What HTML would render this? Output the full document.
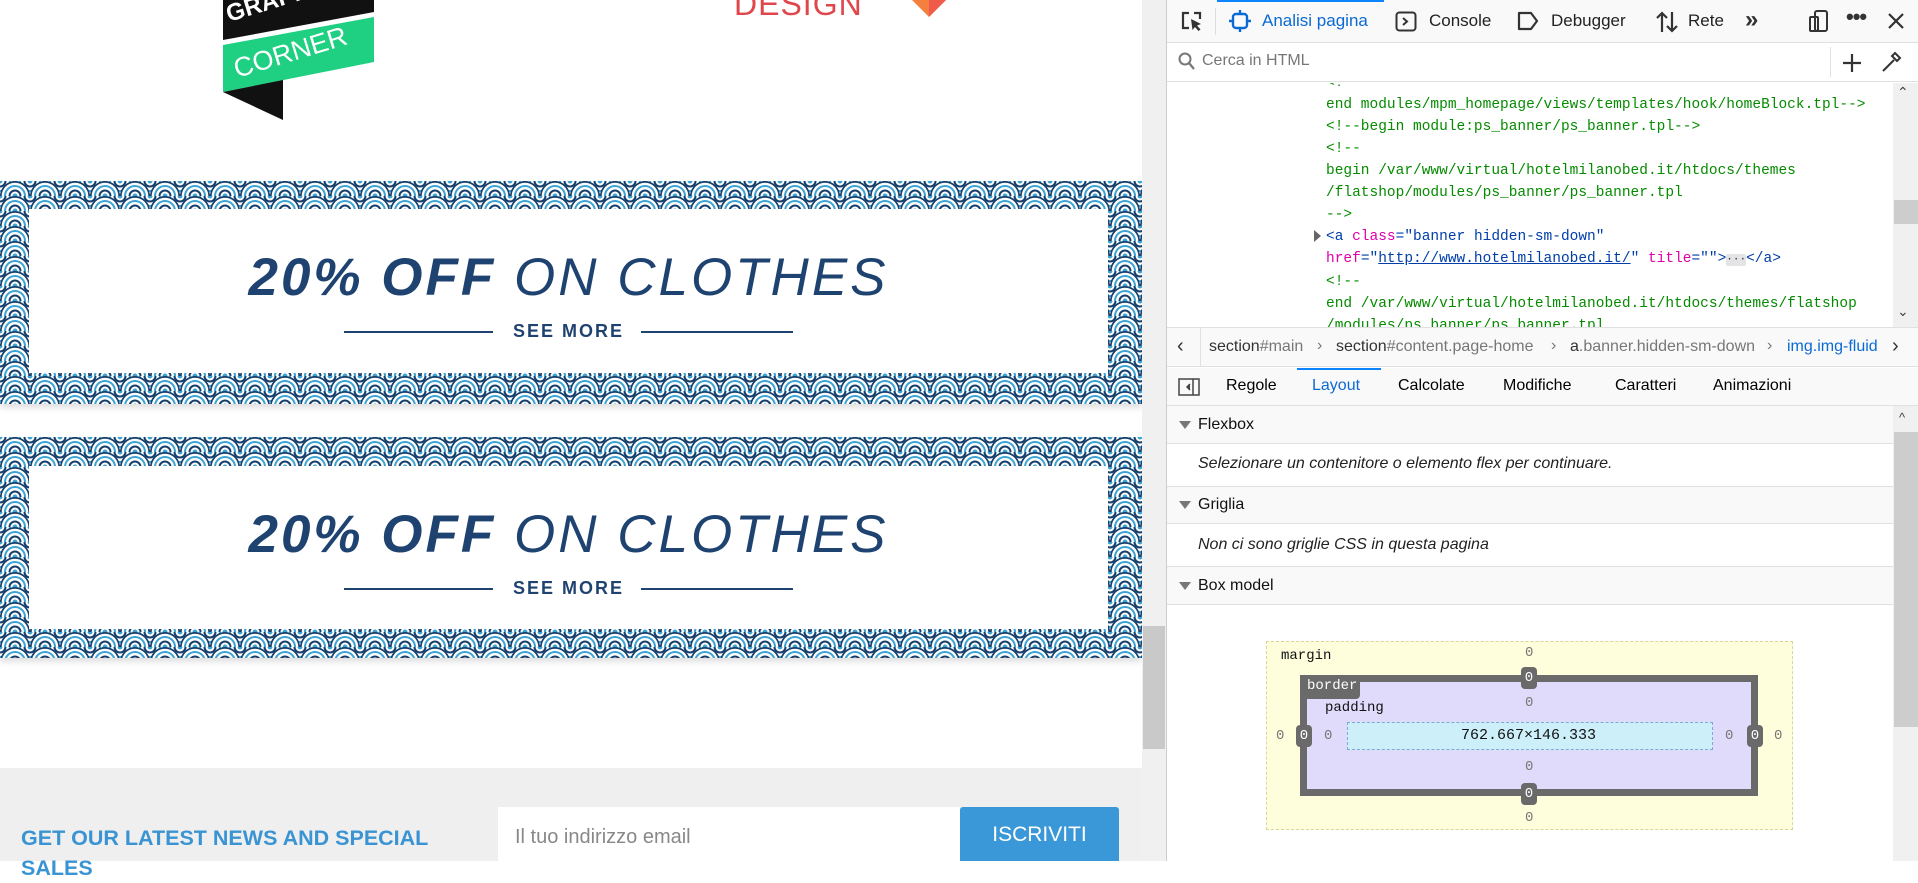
<!DOCTYPE html>
<html><head><meta charset="utf-8">
<style>
*{margin:0;padding:0;box-sizing:border-box}
body{width:1918px;height:861px;overflow:hidden;background:#fff;font-family:"Liberation Sans",sans-serif;position:relative}
.abs{position:absolute}
.banner{position:absolute;left:0;width:1142px;box-shadow:0 4px 6px rgba(0,0,0,.12)}
.inner{position:absolute;left:29px;right:34px;background:#fff;text-align:center;color:#1f4370}
.big{position:absolute;left:0;right:0;font-size:53px;font-style:italic;letter-spacing:3px;white-space:nowrap}
.big b{font-weight:bold}
.see{position:absolute;left:0;right:0;font-size:18px;font-weight:bold;letter-spacing:2px}
.ln{position:absolute;height:2px;background:#1f4370}
.dt{position:absolute;font-size:17px;color:#222;top:11px}
.code{position:absolute;left:1326px;font-family:"Liberation Mono",monospace;font-size:14.5px;color:#058b00;white-space:pre;line-height:22px}
.sec{position:absolute;left:1167px;width:726px;background:#f9f9fa;border-bottom:1px solid #e0e0e2;font-size:16px;color:#111}
.sec .tri{position:absolute;left:12px;top:50%;margin-top:-4px;border-left:6px solid transparent;border-right:6px solid transparent;border-top:8px solid #777}
.sec span{position:absolute;left:31px;top:50%;transform:translateY(-50%)}
.it{position:absolute;left:1198px;font-style:italic;font-size:16px;color:#222}
.bm{font-family:"Liberation Mono",monospace;font-size:14px;position:absolute;color:#333}
.pill{position:absolute;background:#6a6a6a;color:#fff;border-radius:4px;font-family:"Liberation Mono",monospace;font-size:14px;text-align:center;width:16px;height:22px;line-height:22px}
</style></head><body>
<svg width="0" height="0" style="position:absolute">
<defs>
<pattern id="sc" width="30" height="15" patternUnits="userSpaceOnUse">
<g id="arc">
<circle cx="0" cy="0" r="15" fill="#173f6b"/><circle cx="0" cy="0" r="13.3" fill="#fff"/><circle cx="0" cy="0" r="11" fill="#3aa3d3"/><circle cx="0" cy="0" r="9" fill="#fff"/><circle cx="0" cy="0" r="6.5" fill="#173f6b"/><circle cx="0" cy="0" r="4.5" fill="#fff"/><circle cx="0" cy="0" r="2.5" fill="#3aa3d3"/>
</g>
<use href="#arc" x="30" y="0"/>
<use href="#arc" x="15" y="15"/>
</pattern>
</defs></svg>

<!-- logos -->
<svg class="abs" style="left:223px;top:0" width="152" height="122">
<polygon points="0,0 151,0 151,12 0,40" fill="#111"/>
<polygon points="0,45 151,17 151,62 0,92" fill="#1fcf82"/>
<polygon points="0,92 60,80 60,120" fill="#111"/>
<text x="14" y="78" fill="#fff" font-size="27" font-family="Liberation Sans" transform="rotate(-17 14 78)">CORNER</text>
<text x="6" y="22" fill="#fff" font-size="24" font-weight="bold" font-family="Liberation Sans" transform="rotate(-17 6 22)">GRAPHIC</text>
</svg>
<div class="abs" style="left:734px;top:-14px;font-size:32px;color:#e0474c;letter-spacing:1px">DESIGN</div>
<svg class="abs" style="left:912px;top:0" width="34" height="18"><polygon points="0,0 34,0 17,17" fill="#f5803e"/><polygon points="17,0 34,0 17,17" fill="#ef5a4a"/></svg>

<!-- banners -->
<div class="banner" style="top:181px;height:223px">
<svg width="1142" height="223" style="position:absolute;left:0;top:0"><rect width="1142" height="223" fill="url(#sc)"/></svg>
<div class="inner" style="top:28px;height:164px">
<div class="big" style="top:38px"><b>20% OFF</b> ON CLOTHES</div>
<div class="ln" style="left:315px;width:149px;top:122px"></div>
<div class="see" style="top:112px">SEE MORE</div>
<div class="ln" style="left:612px;width:152px;top:122px"></div>
</div></div>
<div class="banner" style="top:437px;height:221px">
<svg width="1142" height="221" style="position:absolute;left:0;top:0"><rect width="1142" height="221" fill="url(#sc)"/></svg>
<div class="inner" style="top:29px;height:163px">
<div class="big" style="top:38px"><b>20% OFF</b> ON CLOTHES</div>
<div class="ln" style="left:315px;width:149px;top:122px"></div>
<div class="see" style="top:112px">SEE MORE</div>
<div class="ln" style="left:612px;width:152px;top:122px"></div>
</div></div>

<!-- footer -->
<div class="abs" style="left:0;top:768px;width:1142px;height:93px;background:#efefef"></div>
<div class="abs" style="left:21px;top:823px;font-size:21.5px;font-weight:bold;color:#3a94d3;line-height:30px;width:420px">GET OUR LATEST NEWS AND SPECIAL SALES</div>
<div class="abs" style="left:498px;top:807px;width:462px;height:54px;background:#fff;font-size:20px;color:#888;padding:19px 17px">Il tuo indirizzo email</div>
<div class="abs" style="left:960px;top:807px;width:159px;height:54px;background:#3a98d8;border-radius:3px 3px 0 0;color:#fff;font-size:21px;text-align:center;line-height:56px">ISCRIVITI</div>

<!-- page scrollbar -->
<div class="abs" style="left:1142px;top:0;width:25px;height:861px;background:#f0f0f0"></div>
<div class="abs" style="left:1143px;top:626px;width:22px;height:123px;background:#c9c9c9"></div>
<div class="abs" style="left:1166px;top:0;width:1px;height:861px;background:#ccc"></div>

<!-- devtools toolbar -->
<div class="abs" style="left:1167px;top:0;width:751px;height:43px;background:#f9f9fa;border-bottom:1px solid #e0e0e2"></div>
<div class="abs" style="left:1217px;top:0;width:167px;height:2px;background:#0a84ff"></div>
<svg class="abs" style="left:1180px;top:10px" width="24" height="24"><path d="M9 3H3v15h6M14 3h6v6" stroke="#333" stroke-width="2.2" fill="none"/><path d="M11 9l10 5-4 1.5 3.5 4-2 1.5-3.5-4-2.5 3z" fill="#333"/></svg>
<div class="abs" style="left:1215px;top:8px;width:1px;height:27px;background:#ddd"></div>
<svg class="abs" style="left:1229px;top:10px" width="22" height="22"><rect x="4" y="4" width="14" height="14" rx="3" stroke="#0a6ad4" stroke-width="2.4" fill="none"/><path d="M11 0v4M11 18v4M0 11h4M18 11h4" stroke="#0a6ad4" stroke-width="2.4"/></svg>
<div class="dt" style="left:1262px;color:#0a6ad4">Analisi pagina</div>
<svg class="abs" style="left:1395px;top:11px" width="22" height="21"><rect x="1.5" y="1.5" width="19" height="18" rx="3" stroke="#333" stroke-width="2" fill="none"/><path d="M8 7l4 3.5L8 14" stroke="#333" stroke-width="2" fill="none"/></svg>
<div class="dt" style="left:1429px">Console</div>
<svg class="abs" style="left:1516px;top:11px" width="24" height="20"><path d="M3 2h12l6 8-6 8H3z" stroke="#333" stroke-width="2.2" fill="none" stroke-linejoin="round"/></svg>
<div class="dt" style="left:1551px">Debugger</div>
<svg class="abs" style="left:1655px;top:10px" width="24" height="24"><path d="M7 22V3M2 8l5-5 5 5M17 2v19M12 16l5 5 5-5" stroke="#333" stroke-width="2.2" fill="none"/></svg>
<div class="dt" style="left:1688px">Rete</div>
<div class="dt" style="left:1745px;top:6px;font-size:24px;font-weight:bold;color:#333">»</div>
<svg class="abs" style="left:1808px;top:9px" width="22" height="24"><rect x="7" y="2" width="12" height="20" rx="2" stroke="#333" stroke-width="2" fill="none"/><rect x="2" y="8" width="8" height="14" rx="1" stroke="#333" stroke-width="2" fill="none"/></svg>
<div class="dt" style="left:1846px;top:4px;font-size:22px;font-weight:bold;color:#333;letter-spacing:-1px">•••</div>
<svg class="abs" style="left:1887px;top:12px" width="18" height="18"><path d="M2 2l14 14M16 2L2 16" stroke="#333" stroke-width="2.2"/></svg>

<!-- search -->
<div class="abs" style="left:1167px;top:44px;width:751px;height:38px;background:#fff;border-bottom:1px solid #e0e0e2"></div>
<svg class="abs" style="left:1178px;top:52px" width="18" height="20"><circle cx="7" cy="7" r="5.5" stroke="#777" stroke-width="2" fill="none"/><path d="M11 11l5 6" stroke="#777" stroke-width="2.2"/></svg>
<div class="abs" style="left:1202px;top:52px;font-size:16px;color:#777">Cerca in HTML</div>
<div class="abs" style="left:1830px;top:47px;width:1px;height:30px;background:#e0e0e2"></div>
<svg class="abs" style="left:1842px;top:53px" width="20" height="20"><path d="M10 1v18M1 10h18" stroke="#333" stroke-width="2.2"/></svg>
<svg class="abs" style="left:1880px;top:50px" width="22" height="24"><path d="M3 21l11-11M12 6l5 5M15 3l5 5-3 3-5-5z" stroke="#333" stroke-width="2" fill="none"/></svg>

<!-- markup -->
<div class="abs" style="left:1167px;top:83px;width:726px;height:244px;background:#fff;overflow:hidden">
<div class="code" style="left:159px;top:-11px">&lt;!--
end modules/mpm_homepage/views/templates/hook/homeBlock.tpl--&gt;
&lt;!--begin module:ps_banner/ps_banner.tpl--&gt;
&lt;!--
begin /var/www/virtual/hotelmilanobed.it/htdocs/themes
/flatshop/modules/ps_banner/ps_banner.tpl
--&gt;
<span style="color:#003eaa">&lt;a <span style="color:#dd00a9">class</span>=<span>"banner hidden-sm-down"</span></span>
<span style="color:#dd00a9">href</span><span style="color:#003eaa">="<u>http://www.hotelmilanobed.it/</u>" <span style="color:#dd00a9">title</span>=""&gt;<span style="background:#e4e4e7;color:#333;border-radius:2px;font-size:11px">···</span>&lt;/a&gt;</span>
&lt;!--
end /var/www/virtual/hotelmilanobed.it/htdocs/themes/flatshop
/modules/ps_banner/ps_banner.tpl</div>
<div class="abs" style="left:147px;top:147px;border-top:6px solid transparent;border-bottom:6px solid transparent;border-left:7px solid #666"></div>
</div>
<div class="abs" style="left:1893px;top:83px;width:25px;height:244px;background:#f0f0f0"></div>
<div class="abs" style="left:1894px;top:200px;width:24px;height:24px;background:#cdcdcd"></div>
<div class="abs" style="left:1897px;top:84px;font-size:14px;color:#444">⌃</div>
<div class="abs" style="left:1897px;top:303px;font-size:14px;color:#444">⌄</div>

<!-- breadcrumb -->
<div class="abs" style="left:1167px;top:327px;width:751px;height:40px;background:#f9f9fa;border-top:1px solid #e0e0e2;border-bottom:1px solid #e0e0e2;font-size:16px;color:#777;white-space:nowrap">
<span class="abs" style="left:10px;top:7px;font-size:20px;color:#333">‹</span>
<div class="abs" style="left:33px;top:0;width:1px;height:38px;background:#e0e0e2"></div>
<span class="abs" style="left:42px;top:10px"><span style="color:#333">section</span>#main</span>
<span class="abs" style="left:150px;top:9px">›</span>
<span class="abs" style="left:169px;top:10px"><span style="color:#333">section</span>#content.page-home</span>
<span class="abs" style="left:384px;top:9px">›</span>
<span class="abs" style="left:403px;top:10px"><span style="color:#333">a</span>.banner.hidden-sm-down</span>
<span class="abs" style="left:600px;top:9px">›</span>
<span class="abs" style="left:620px;top:10px;color:#0a6ad4">img.img-fluid</span>
<span class="abs" style="left:725px;top:7px;font-size:20px;color:#333">›</span>
</div>

<!-- side tabs -->
<div class="abs" style="left:1167px;top:368px;width:751px;height:38px;background:#f9f9fa;border-bottom:1px solid #e0e0e2;font-size:16px;color:#111"></div>
<div class="abs" style="left:1297px;top:368px;width:84px;height:2px;background:#0a84ff"></div>
<svg class="abs" style="left:1178px;top:378px" width="22" height="18"><rect x="1" y="1" width="20" height="16" stroke="#444" stroke-width="1.5" fill="none"/><path d="M15 1v16M12 6l-3 3 3 3" stroke="#444" stroke-width="1.5" fill="#444"/></svg>
<div class="abs" style="left:1226px;top:377px;font-size:16px">Regole</div>
<div class="abs" style="left:1312px;top:377px;font-size:16px;color:#0a6ad4">Layout</div>
<div class="abs" style="left:1398px;top:377px;font-size:16px">Calcolate</div>
<div class="abs" style="left:1503px;top:377px;font-size:16px">Modifiche</div>
<div class="abs" style="left:1615px;top:377px;font-size:16px">Caratteri</div>
<div class="abs" style="left:1713px;top:377px;font-size:16px">Animazioni</div>

<!-- layout panel -->
<div class="sec" style="top:406px;height:38px"><i class="tri"></i><span>Flexbox</span></div>
<div class="it" style="top:455px">Selezionare un contenitore o elemento flex per continuare.</div>
<div class="abs" style="left:1167px;top:486px;width:726px;height:1px;background:#e0e0e2"></div>
<div class="sec" style="top:487px;height:37px"><i class="tri"></i><span>Griglia</span></div>
<div class="it" style="top:536px">Non ci sono griglie CSS in questa pagina</div>
<div class="abs" style="left:1167px;top:566px;width:726px;height:1px;background:#e0e0e2"></div>
<div class="sec" style="top:567px;height:38px"><i class="tri"></i><span>Box model</span></div>
<div class="abs" style="left:1893px;top:406px;width:25px;height:455px;background:#f0f0f0"></div>
<div class="abs" style="left:1894px;top:432px;width:24px;height:295px;background:#cdcdcd"></div>
<div class="abs" style="left:1899px;top:410px;font-size:13px;color:#444">^</div>

<!-- box model -->
<div class="abs" style="left:1266px;top:641px;width:527px;height:189px;background:#fefedd;border:1px dashed #d7d79a"></div>
<div class="abs" style="left:1300px;top:675px;width:458px;height:121px;background:#e0dbfb;border:7px solid #6a6a6a"></div>
<div class="abs" style="left:1300px;top:675px;width:60px;height:24px;background:#6a6a6a;border-radius:0 0 4px 0"></div>
<div class="abs" style="left:1347px;top:722px;width:366px;height:28px;background:#cdeffa;border:1px dashed #7fa8d4"></div>
<div class="bm" style="left:1461px;top:727px;color:#111;font-size:15px">762.667×146.333</div>
<div class="bm" style="left:1281px;top:648px;color:#111">margin</div>
<div class="bm" style="left:1307px;top:678px;color:#fff">border</div>
<div class="bm" style="left:1325px;top:700px;color:#111">padding</div>
<div class="bm" style="left:1525px;top:645px;color:#777">0</div>
<div class="bm" style="left:1525px;top:695px;color:#777">0</div>
<div class="bm" style="left:1525px;top:759px;color:#777">0</div>
<div class="bm" style="left:1525px;top:810px;color:#777">0</div>
<div class="bm" style="left:1276px;top:728px;color:#777">0</div>
<div class="bm" style="left:1324px;top:728px;color:#777">0</div>
<div class="bm" style="left:1725px;top:728px;color:#777">0</div>
<div class="bm" style="left:1774px;top:728px;color:#777">0</div>
<div class="pill" style="left:1521px;top:667px">0</div>
<div class="pill" style="left:1521px;top:783px">0</div>
<div class="pill" style="left:1296px;top:725px">0</div>
<div class="pill" style="left:1747px;top:725px">0</div>
</body></html>
